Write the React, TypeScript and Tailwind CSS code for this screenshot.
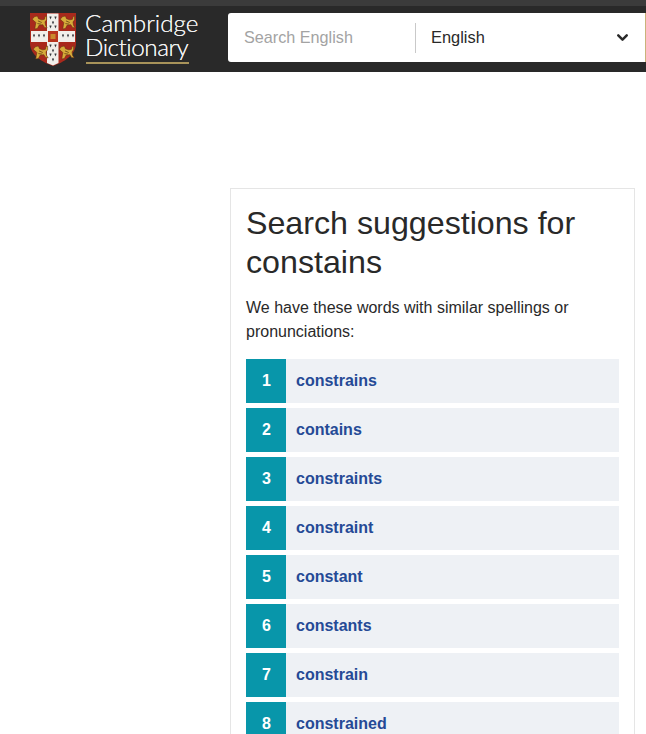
import { ChevronDown } from 'lucide-react';

const WORDS = ['constrains', 'contains', 'constraints', 'constraint', 'constant', 'constants', 'constrain', 'constrained'];

function Lion({ x, y }: { x: number; y: number }) {
  return (
    <g transform={`translate(${x} ${y}) scale(1.08)`}>
      <path
        d="M0.5 3.5 L3 1 L5.5 0.5 L6.5 3 L9.5 4 L12 3.5 L12.5 1 L14 0.5 L14 4 L12.5 6 L13 9 L14.5 11.5 L12 11 L10.5 8.5 L7 9 L5.5 12 L3 12.5 L3.5 9.5 L4 6.5 L2.5 5 Z"
        fill="#d8ac3a"
        stroke="#5e2a12"
        strokeWidth="0.5"
      />
      <path d="M6 5 L9.5 6.5 M5.5 7.5 L9 8" stroke="#6b4517" strokeWidth="0.8" />
    </g>
  );
}

function Ermine({ x, y }: { x: number; y: number }) {
  return <path d={`M${x} ${y} l1 2.6 l1 -2.6 v-0.6 h-2 Z`} fill="#34373b" />;
}

function Shield() {
  return (
    <svg width="46" height="53" viewBox="0 0 46 53" className="shrink-0">
      <path d="M0 0 H46 V30 C46 42 34 49 23 53 C12 49 0 42 0 30 Z" fill="#a9291c" />
      <path d="M17 0.5 H28.5 V50 L23 52.5 L17 50 Z" fill="#f1efea" />
      <rect x="1" y="18" width="44" height="11" fill="#f1efea" />
      <rect x="18" y="18" width="10" height="11" fill="#b8351f" />
      <rect x="20.5" y="21" width="5" height="5" fill="#c98a2e" />
      <Lion x={1.5} y={2.5} />
      <Lion x={29.5} y={2.5} />
      <Lion x={2.5} y={32.5} />
      <Lion x={28.5} y={32.5} />
      {[
        [19.5, 4], [24.5, 4], [22, 9], [19.5, 13], [24.5, 13],
        [19.5, 32], [24.5, 32], [22, 37], [19.5, 41], [24.5, 41], [22, 46],
        [3, 22], [8, 22], [13, 22], [32, 22], [37, 22], [42, 22],
      ].map(([x, y]) => (
        <Ermine key={`${x}-${y}`} x={x} y={y} />
      ))}
    </svg>
  );
}

export default function App() {
  return (
    <div className="h-[734px] overflow-hidden bg-white font-['Liberation_Sans',Arial,sans-serif] text-[#292929]">
      <header className="border-t-[6px] border-[#3b3b3b] bg-[#292929]">
        <div className="flex h-[66px] items-start pt-[7px]">
          <div className="ml-[30px] flex w-[198px] items-start gap-[9px]">
            <Shield />
            <div className="w-[113px] font-['Lato',sans-serif] text-[#f2f2f2]">
              <div className="-mt-[2px] text-[24.3px] leading-[24px] font-light [text-shadow:0_0_0.4px_#f2f2f2]">
                Cambridge
                <br />
                <span className="tracking-[-0.5px]">Dictionary</span>
              </div>
              <div className="mt-[3px] ml-[1px] h-[1.5px] w-[103px] bg-[#a8935a]" />
            </div>
          </div>
          <div className="flex h-[49px] flex-1 items-center rounded-l-[3px] bg-white">
            <div className="w-[187px] pl-4 text-[16.2px] text-[#a3a3a3]">Search English</div>
            <div className="h-[30px] w-px bg-[#c9c9c9]" />
            <div className="pl-[15px] text-[16.4px] text-[#292929]">English</div>
            <ChevronDown className="ml-auto mr-[14px] size-[17px] text-[#292929]" strokeWidth={3.5} />
            <div className="h-full w-px bg-[#c9b37a]" />
          </div>
        </div>
      </header>

      <main className="ml-[230px] mt-[116px] w-[405px] border border-[#e5e5e5] p-[15px]">
        <h1 className="text-[32.2px] font-normal leading-[39px] text-[#292929]">Search suggestions for constains</h1>
        <p className="mt-[14px] text-base leading-6 text-[#292929]">
          We have these words with similar spellings or pronunciations:
        </p>
        <ol className="mt-[15px] flex flex-col gap-[5px]">
          {WORDS.map((word, i) => (
            <li key={word} className="flex h-[44px] items-center bg-[#eef1f5]">
              <span className="flex h-full w-10 items-center justify-center bg-[#0896aa] pl-[1px] font-bold text-white">{i + 1}</span>
              <a className="pl-[10px] font-bold text-[#254a96]">{word}</a>
            </li>
          ))}
        </ol>
      </main>
    </div>
  );
}
